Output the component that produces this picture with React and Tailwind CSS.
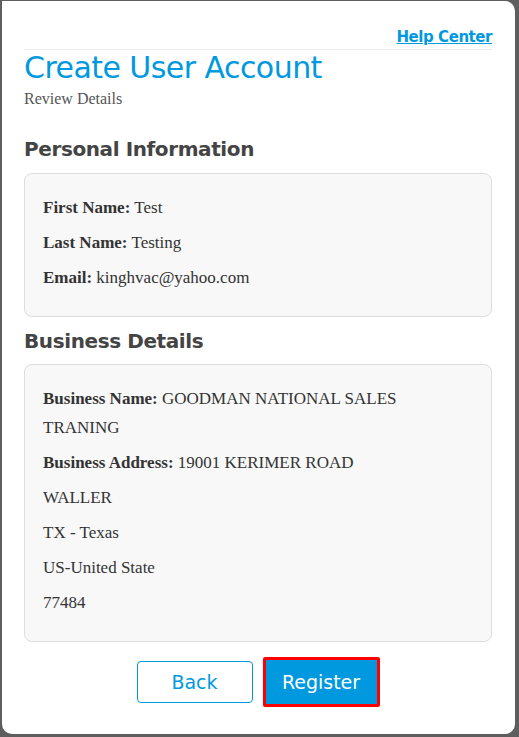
export default function App() {
  return (
    <div className="w-[519px] h-[737px] bg-[#5e5e5e] pl-[2px] pt-[1px] pr-[4px] pb-[3px]">
      <div className="h-full bg-white rounded-tr-[10px] rounded-b-[10px] pl-[22px] pr-[23px] pt-[27px]">
        <div className="flex justify-end border-b border-[#eeeeee] pb-[3px]">
          <a href="#" className="font-['DejaVu_Sans',Verdana,sans-serif] text-[15px] font-bold text-[#0099e0] underline leading-[18px] tracking-[-0.45px]">Help Center</a>
        </div>
        <h1 className="font-['DejaVu_Sans',Verdana,sans-serif] text-[30px] leading-[36px] text-[#0099e0] tracking-[-0.55px]">Create User Account</h1>
        <p className="font-['Liberation_Serif','Times_New_Roman',serif] text-[16px] leading-[20px] text-[#555555] mt-[3px]">Review Details</p>
        <h2 className="font-['DejaVu_Sans',Verdana,sans-serif] text-[20px] font-bold text-[#444444] leading-[24px] mt-[28px] tracking-[-0.4px]">Personal Information</h2>
        <div className="font-['Liberation_Serif','Times_New_Roman',serif] mt-[12px] bg-[#f8f8f8] border border-[#dddddd] rounded-[8px] px-[18px] pt-[19px] pb-[24px] text-[17px] leading-[29px] text-[#333333] flex flex-col gap-[6px]">
          <p><b>First Name:</b> Test</p>
          <p><b>Last Name:</b> Testing</p>
          <p><b>Email:</b> kinghvac@yahoo.com</p>
        </div>
        <h2 className="font-['DejaVu_Sans',Verdana,sans-serif] text-[20px] font-bold text-[#444444] leading-[24px] mt-[12px] tracking-[-0.4px]">Business Details</h2>
        <div className="font-['Liberation_Serif','Times_New_Roman',serif] mt-[11px] bg-[#f8f8f8] border border-[#dddddd] rounded-[8px] px-[18px] pt-[19px] pb-[24px] text-[17px] leading-[29px] text-[#333333] flex flex-col gap-[6px]">
          <p><b>Business Name:</b> GOODMAN NATIONAL SALES TRANING</p>
          <p><b>Business Address:</b> 19001 KERIMER ROAD</p>
          <p>WALLER</p>
          <p>TX - Texas</p>
          <p>US-United State</p>
          <p>77484</p>
        </div>
        <div className="flex justify-center items-center gap-[10px] mt-[15px]">
          <button className="font-['DejaVu_Sans',Verdana,sans-serif] w-[116px] h-[42px] border border-[#0099e0] rounded-[4px] bg-white text-[#0099e0] text-[19px]">Back</button>
          <div className="border-[3px] border-[#ff0000] rounded-[2px]">
            <button className="font-['DejaVu_Sans',Verdana,sans-serif] w-[111px] h-[44px] bg-[#0099e0] text-white text-[19px] block">Register</button>
          </div>
        </div>
      </div>
    </div>
  );
}
